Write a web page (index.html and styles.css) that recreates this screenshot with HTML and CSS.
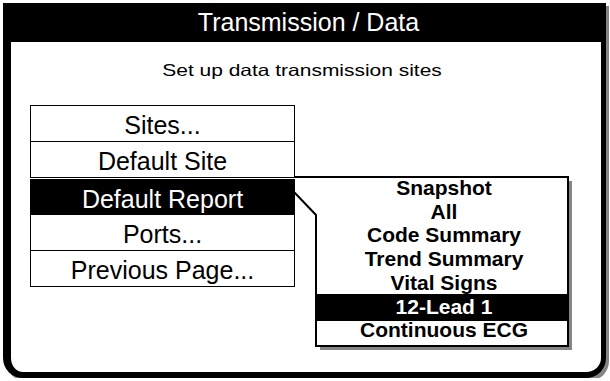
FILE: index.html
```html
<!DOCTYPE html>
<html lang="en">
<head>
    <meta charset="UTF-8">
    <meta name="viewport" content="width=device-width, initial-scale=1.0">
    <title>Transmission / Data</title>
    <link rel="stylesheet" href="styles.css">
</head>
<body>

    <div class="frame">
        <div class="title">Transmission / Data</div>
        <div class="subtitle"><span>Set up data transmission sites</span></div>

        <div class="menu">
            <div class="item">Sites...</div>
            <div class="item">Default Site</div>
            <div class="item active">Default Report</div>
            <div class="item">Ports...</div>
            <div class="item">Previous Page...</div>
        </div>

        <div class="popup">
            <svg class="callout" width="284" height="177" viewBox="0 0 284 177">
                <rect x="29" y="6" width="252" height="169" fill="#858585"/>
                <polygon points="3,17 25,40 25,171 277,171 277,2 2,2" fill="#fff"/>
                <polyline points="3,17 25,40 25,171 277,171 277,2 2,2" fill="none" stroke="#000" stroke-width="2"/>
            </svg>
            <div class="reports">
                <div class="report">Snapshot</div>
                <div class="report">All</div>
                <div class="report">Code Summary</div>
                <div class="report">Trend Summary</div>
                <div class="report">Vital Signs</div>
                <div class="report selected">12-Lead 1</div>
                <div class="report">Continuous ECG</div>
            </div>
        </div>
    </div>

</body>
</html>
```

FILE: styles.css
```css
body {
    margin: 0;
    background: #fff;
    color: #000;
    font-family: "Liberation Sans", Arial, sans-serif;
}

.frame {
    position: relative;
    margin: 3px 0 0 3px;
    width: 603px;
    height: 375px;
    box-sizing: border-box;
    border: solid #000;
    border-width: 0 5px 6px 8px;
    border-radius: 0 0 20px 20px;
    box-shadow: 3px 3px 0 #858585;
    background: #fff;
}

.title {
    height: 39px;
    line-height: 39px;
    padding-left: 5px;
    background: #000;
    color: #fff;
    font-size: 25px;
    text-align: center;
}

.subtitle {
    margin-top: 18px;
    padding-right: 7px;
    height: 20px;
    line-height: 20px;
    font-size: 16.5px;
    text-align: center;
}

.subtitle span {
    display: inline-block;
    transform: scaleX(1.27); /* the original face is wider than Arial */
}

.menu {
    position: relative;
    z-index: 1; /* keeps the boxes over the callout tail */
    margin: 26px 0 0 19px;
    width: 265px;
}

.item {
    height: 37px;
    box-sizing: border-box;
    margin-top: -1px;
    padding-top: 2px;
    border: 1px solid #000;
    background: #fff;
    font-size: 25px;
    line-height: 35px;
    text-align: center;
}

.item.active {
    margin-top: 1px;
    height: 36px;
    background: #000;
    color: #fff;
}

/* report list that pops out of "Default Report" */
.popup {
    position: absolute;
    left: 280px;
    top: 172px;
    width: 284px;
    height: 177px;
}

.callout {
    display: block;
}

.reports {
    position: absolute;
    left: 25px;
    top: 1px;
    width: 252px;
}

.report {
    padding-left: 4px;
    font-size: 21px;
    font-weight: bold;
    line-height: 23.7px;
    text-align: center;
}

.report.selected {
    margin: -1px 0 -3px;
    padding-top: 1px;
    padding-bottom: 3px;
    background: #000;
    color: #fff;
}
```
